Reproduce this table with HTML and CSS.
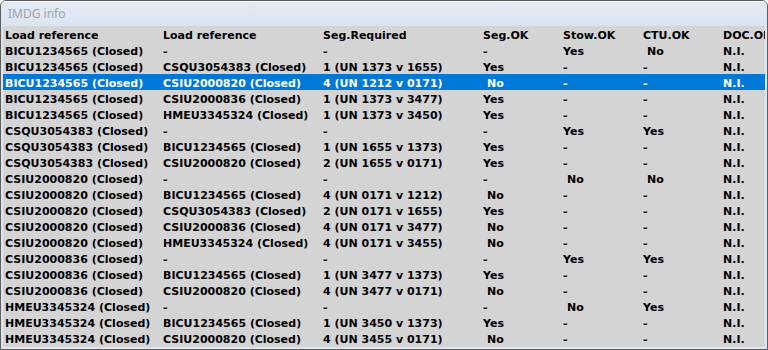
FILE: index.html
```
<!DOCTYPE html>
<html>
<head>
<meta charset="utf-8">
<title>IMDG info</title>
<link rel="stylesheet" href="styles.css">
</head>
<body>
<div class="window">
  <div class="titlebar">IMDG info</div>
  <div class="frame">
    <div class="list">
      <div class="row head"><span>Load reference</span><span>Load reference</span><span>Seg.Required</span><span>Seg.OK</span><span>Stow.OK</span><span>CTU.OK</span><span>DOC.OK</span></div>
      <div class="row"><span>BICU1234565 (Closed)</span><span>-</span><span>-</span><span>-</span><span>Yes</span><span class="no">No</span><span>N.I.</span></div>
      <div class="row"><span>BICU1234565 (Closed)</span><span>CSQU3054383 (Closed)</span><span>1 (UN 1373 v 1655)</span><span>Yes</span><span>-</span><span>-</span><span>N.I.</span></div>
      <div class="row selected"><span>BICU1234565 (Closed)</span><span>CSIU2000820 (Closed)</span><span>4 (UN 1212 v 0171)</span><span class="no">No</span><span>-</span><span>-</span><span>N.I.</span></div>
      <div class="row"><span>BICU1234565 (Closed)</span><span>CSIU2000836 (Closed)</span><span>1 (UN 1373 v 3477)</span><span>Yes</span><span>-</span><span>-</span><span>N.I.</span></div>
      <div class="row"><span>BICU1234565 (Closed)</span><span>HMEU3345324 (Closed)</span><span>1 (UN 1373 v 3450)</span><span>Yes</span><span>-</span><span>-</span><span>N.I.</span></div>
      <div class="row"><span>CSQU3054383 (Closed)</span><span>-</span><span>-</span><span>-</span><span>Yes</span><span>Yes</span><span>N.I.</span></div>
      <div class="row"><span>CSQU3054383 (Closed)</span><span>BICU1234565 (Closed)</span><span>1 (UN 1655 v 1373)</span><span>Yes</span><span>-</span><span>-</span><span>N.I.</span></div>
      <div class="row"><span>CSQU3054383 (Closed)</span><span>CSIU2000820 (Closed)</span><span>2 (UN 1655 v 0171)</span><span>Yes</span><span>-</span><span>-</span><span>N.I.</span></div>
      <div class="row"><span>CSIU2000820 (Closed)</span><span>-</span><span>-</span><span>-</span><span class="no">No</span><span class="no">No</span><span>N.I.</span></div>
      <div class="row"><span>CSIU2000820 (Closed)</span><span>BICU1234565 (Closed)</span><span>4 (UN 0171 v 1212)</span><span class="no">No</span><span>-</span><span>-</span><span>N.I.</span></div>
      <div class="row"><span>CSIU2000820 (Closed)</span><span>CSQU3054383 (Closed)</span><span>2 (UN 0171 v 1655)</span><span>Yes</span><span>-</span><span>-</span><span>N.I.</span></div>
      <div class="row"><span>CSIU2000820 (Closed)</span><span>CSIU2000836 (Closed)</span><span>4 (UN 0171 v 3477)</span><span class="no">No</span><span>-</span><span>-</span><span>N.I.</span></div>
      <div class="row"><span>CSIU2000820 (Closed)</span><span>HMEU3345324 (Closed)</span><span>4 (UN 0171 v 3455)</span><span class="no">No</span><span>-</span><span>-</span><span>N.I.</span></div>
      <div class="row"><span>CSIU2000836 (Closed)</span><span>-</span><span>-</span><span>-</span><span>Yes</span><span>Yes</span><span>N.I.</span></div>
      <div class="row"><span>CSIU2000836 (Closed)</span><span>BICU1234565 (Closed)</span><span>1 (UN 3477 v 1373)</span><span>Yes</span><span>-</span><span>-</span><span>N.I.</span></div>
      <div class="row"><span>CSIU2000836 (Closed)</span><span>CSIU2000820 (Closed)</span><span>4 (UN 3477 v 0171)</span><span class="no">No</span><span>-</span><span>-</span><span>N.I.</span></div>
      <div class="row"><span>HMEU3345324 (Closed)</span><span>-</span><span>-</span><span>-</span><span class="no">No</span><span>Yes</span><span>N.I.</span></div>
      <div class="row"><span>HMEU3345324 (Closed)</span><span>BICU1234565 (Closed)</span><span>1 (UN 3450 v 1373)</span><span>Yes</span><span>-</span><span>-</span><span>N.I.</span></div>
      <div class="row"><span>HMEU3345324 (Closed)</span><span>CSIU2000820 (Closed)</span><span>4 (UN 3455 v 0171)</span><span class="no">No</span><span>-</span><span>-</span><span>N.I.</span></div>
    </div>
  </div>
</div>
</body>
</html>
```
FILE: styles.css
```
* { box-sizing: border-box; }
html, body { margin: 0; padding: 0; background: #ffffff; }
.window {
  width: 768px;
  height: 350px;
  border: 1px solid #5e5e5e;
  border-radius: 6px 6px 0 0;
  background: #dce6f2;
  display: flex;
  flex-direction: column;
  overflow: hidden;
}
.titlebar {
  height: 25px;
  flex: none;
  padding-left: 7px;
  padding-bottom: 1px;
  display: flex;
  align-items: center;
  font-family: "Noto Sans", "Open Sans", sans-serif;
  font-size: 12px;
  color: #a3a3a3;
  background: linear-gradient(#e3ebf5, #dae4f1);
  border-top: 1px solid #f4f7fb;
}
.frame {
  flex: 1;
  padding: 0 2px 2px 2px;
  display: flex;
  min-height: 0;
}
.list {
  flex: 1;
  background: #d4d4d4;
  display: flex;
  flex-direction: column;
  overflow: hidden;
  font-family: "DejaVu Sans", sans-serif;
  font-weight: bold;
  font-size: 11px;
  color: #000000;
}
.row {
  height: 16px;
  flex: none;
  display: grid;
  grid-template-columns: 158px 160px 160px 80px 80px 80px 1fr;
  padding-left: 2px;
  padding-top: 4px;
  align-items: start;
  white-space: nowrap;
  line-height: 12px;
}
.row span { overflow: hidden; }
.row .no { padding-left: 4px; }
.row.selected { background: #0078d7; color: #ffffff; }
```
